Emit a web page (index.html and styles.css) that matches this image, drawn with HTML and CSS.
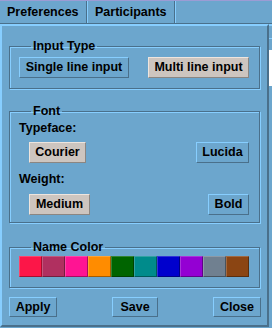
FILE: index.html
```html
<!DOCTYPE html>
<html lang="en">
<head>
    <meta charset="UTF-8">
    <meta name="viewport" content="width=device-width, initial-scale=1.0">
    <title>Preferences</title>
    <link rel="stylesheet" href="styles.css">
</head>
<body>
    <!-- Tab bar -->
    <div class="tabs">
        <span class="tab">Preferences</span>
        <span class="tab">Participants</span>
    </div>

    <div class="main">
        <div class="panel">
            <fieldset class="group">
                <legend>Input Type</legend>
                <div class="row">
                    <button type="button" class="btn-single">Single line input</button>
                    <button type="button" class="btn-multi selected">Multi line input</button>
                </div>
            </fieldset>

            <fieldset class="group font-group">
                <legend>Font</legend>
                <div class="label">Typeface:</div>
                <div class="row indent">
                    <button type="button" class="btn-courier selected">Courier</button>
                    <button type="button" class="btn-lucida">Lucida</button>
                </div>
                <div class="label weight">Weight:</div>
                <div class="row indent">
                    <button type="button" class="btn-medium selected">Medium</button>
                    <button type="button" class="btn-bold">Bold</button>
                </div>
            </fieldset>

            <fieldset class="group color-group">
                <legend>Name Color</legend>
                <div class="swatches">
                    <span class="swatch" style="background:#fc1648"></span>
                    <span class="swatch" style="background:#b03060"></span>
                    <span class="swatch" style="background:#ff1493"></span>
                    <span class="swatch" style="background:#ff8c00"></span>
                    <span class="swatch" style="background:#006400"></span>
                    <span class="swatch" style="background:#008b8b"></span>
                    <span class="swatch" style="background:#0000cd"></span>
                    <span class="swatch" style="background:#9400d3"></span>
                    <span class="swatch" style="background:#708090"></span>
                    <span class="swatch" style="background:#8b4513"></span>
                </div>
            </fieldset>

            <div class="actions">
                <button type="button" class="btn-apply">Apply</button>
                <button type="button" class="btn-save">Save</button>
                <button type="button" class="btn-close">Close</button>
            </div>
        </div>

        <!-- edge of the next widget -->
        <div class="edge">
            <div class="edge-top"></div>
            <div class="edge-white"></div>
        </div>
    </div>
</body>
</html>
```

FILE: styles.css
```css
:root {
    --bg-color: #6ca6cd;
    --light-color: #87ceff;
    --dark-color: #4a708b;
    --gray-color: #cdc5bf;
    --gray-light: #eee5de;
    --gray-dark: #8b8682;
    --text-color: #000;
}

body {
    margin: 0;
    font-family: "Liberation Sans", Arial, sans-serif;
    font-size: 12.5px;
    font-weight: bold;
    color: var(--text-color);
    background-color: var(--bg-color);
    border-top: 1px solid #9c9cd4;
    height: 327px;
    overflow: hidden;
}

.tabs {
    display: flex;
    height: 22px;
    border-bottom: 1px solid var(--dark-color);
}

.tab {
    line-height: 22px;
    padding: 0 7px;
    border-right: 1px solid var(--dark-color);
    box-shadow: 1px 0 0 var(--light-color);
}

.tab:first-child {
    width: 72px;
}

.tab:nth-child(2) {
    width: 72px;
    padding-left: 8px;
}

.main {
    display: flex;
}

.panel {
    width: 265px;
    border-top: 2px solid var(--light-color);
    border-left: 2px solid var(--light-color);
    border-right: 2px solid var(--dark-color);
    border-bottom: 2px solid var(--dark-color);
    padding: 13px 0 8px;
}

.group {
    margin: 0 7px;
    padding: 4px 10px 10px 9px;
    border: 1px solid var(--dark-color);
    box-shadow: inset 1px 1px 0 var(--light-color), 1px 1px 0 var(--light-color);
    min-width: 0;
}

.group + .group {
    margin-top: 15px;
}

.color-group {
    margin-top: 17px !important;
    padding-top: 2px;
}

.font-group {
    padding-top: 3px;
    padding-bottom: 7px;
}

legend {
    line-height: 14px;
    padding: 0 2px;
    margin-left: 12px;
}

.row {
    display: flex;
    justify-content: space-between;
}

.indent {
    padding-left: 10px;
    margin-top: 7px;
}

.label {
    line-height: 14px;
}

.label.weight {
    margin-top: 9px;
}

.label.weight + .indent {
    margin-top: 8px;
}

button {
    font: inherit;
    color: var(--text-color);
    height: 21px;
    line-height: 19px;
    padding: 0;
    text-align: center;
    background-color: var(--bg-color);
    border: 1px solid;
    border-color: var(--light-color) var(--dark-color) var(--dark-color) var(--light-color);
    border-radius: 0;
}

button.selected {
    background-color: var(--gray-color);
    border-color: var(--gray-light) var(--gray-dark) var(--gray-dark) var(--gray-light);
}

.btn-single { width: 110px; }
.btn-multi { width: 101px; }
.btn-courier { width: 57px; }
.btn-lucida { width: 53px; }
.btn-medium { width: 61px; }
.btn-bold { width: 41px; }
.btn-apply { width: 48px; }
.btn-save { width: 46px; }
.btn-close { width: 48px; }

.swatches {
    display: flex;
}

.swatch {
    width: 23px;
    height: 21px;
    box-shadow: inset 1px 1px 0 rgba(255, 255, 255, 0.2), inset -1px -1px 0 rgba(0, 0, 0, 0.35);
}

.actions {
    display: flex;
    justify-content: space-between;
    margin: 9px 6px 0 7px;
}

.actions button {
    height: 20px;
    line-height: 18px;
}

.edge {
    flex: 1;
    display: flex;
    flex-direction: column;
    border-top: 2px solid var(--light-color);
}

.edge-top {
    height: 12px;
    border-bottom: 1px solid var(--light-color);
}

.edge-white {
    margin-top: 11px;
    height: 36px;
    background-color: #fff;
}
```
